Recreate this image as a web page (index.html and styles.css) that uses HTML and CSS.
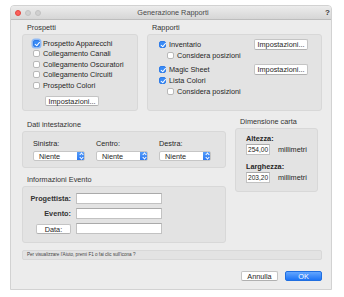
FILE: index.html
```html
<!DOCTYPE html>
<html lang="it">
<head>
    <meta charset="UTF-8">
    <meta name="viewport" content="width=device-width, initial-scale=1.0">
    <title>Generazione Rapporti</title>
    <link rel="stylesheet" href="styles.css">
</head>
<body>
    <div class="window">
        <div class="titlebar">
            <div class="lights">
                <span class="light red"></span>
                <span class="light"></span>
                <span class="light"></span>
            </div>
            <div class="title">Generazione Rapporti</div>
            <div class="help-icon">?</div>
        </div>

        <div class="content">
            <div class="top-row">
                <section class="group prospetti">
                    <div class="group-label">Prospetti</div>
                    <div class="group-box">
                        <div class="check"><span class="box checked focus"></span>Prospetto Apparecchi</div>
                        <div class="check"><span class="box"></span>Collegamento Canali</div>
                        <div class="check"><span class="box"></span>Collegamento Oscuratori</div>
                        <div class="check"><span class="box"></span>Collegamento Circuiti</div>
                        <div class="check"><span class="box"></span>Prospetto Colori</div>
                        <button class="btn btn-settings">Impostazioni...</button>
                    </div>
                </section>

                <section class="group rapporti">
                    <div class="group-label">Rapporti</div>
                    <div class="group-box">
                        <div class="report-row">
                            <div class="check"><span class="box checked"></span>Inventario</div>
                            <button class="btn">Impostazioni...</button>
                        </div>
                        <div class="check sub"><span class="box"></span>Considera posizioni</div>
                        <div class="report-row spaced">
                            <div class="check"><span class="box checked"></span>Magic Sheet</div>
                            <button class="btn">Impostazioni...</button>
                        </div>
                        <div class="check"><span class="box checked"></span>Lista Colori</div>
                        <div class="check sub"><span class="box"></span>Considera posizioni</div>
                    </div>
                </section>
            </div>

            <div class="mid-row">
                <div class="left-col">
                    <section class="group dati">
                        <div class="group-label">Dati intestazione</div>
                        <div class="group-box">
                            <div class="field">
                                <div class="field-label">Sinistra:</div>
                                <div class="popup"><span>Niente</span><span class="stepper"></span></div>
                            </div>
                            <div class="field">
                                <div class="field-label">Centro:</div>
                                <div class="popup"><span>Niente</span><span class="stepper"></span></div>
                            </div>
                            <div class="field">
                                <div class="field-label">Destra:</div>
                                <div class="popup"><span>Niente</span><span class="stepper"></span></div>
                            </div>
                        </div>
                    </section>

                    <section class="group evento">
                        <div class="group-label">Informazioni Evento</div>
                        <div class="group-box">
                            <div class="form-row">
                                <div class="form-label">Progettista:</div>
                                <div class="input"></div>
                            </div>
                            <div class="form-row">
                                <div class="form-label">Evento:</div>
                                <div class="input"></div>
                            </div>
                            <div class="form-row">
                                <div class="form-label"><button class="btn btn-data">Data:</button></div>
                                <div class="input"></div>
                            </div>
                        </div>
                    </section>
                </div>

                <section class="group carta">
                    <div class="group-label">Dimensione carta</div>
                    <div class="group-box">
                        <div class="size-label">Altezza:</div>
                        <div class="size-row"><div class="input small">254,00</div><span>millimetri</span></div>
                        <div class="size-label">Larghezza:</div>
                        <div class="size-row"><div class="input small">203,20</div><span>millimetri</span></div>
                    </div>
                </section>
            </div>

            <div class="help-bar">Per visualizzare l'Aiuto, premi F1 o fai clic sull'icona ?</div>

            <div class="actions">
                <button class="btn btn-action">Annulla</button>
                <button class="btn btn-action primary">OK</button>
            </div>
        </div>
    </div>
</body>
</html>
```

FILE: styles.css
```css
:root {
    --window-bg: #ececec;
    --group-bg: #e3e3e3;
    --group-border: #d8d8d8;
    --text: #262626;
    --blue: #3a8bf6;
}

* {
    box-sizing: border-box;
    margin: 0;
    padding: 0;
}

body {
    font-family: 'Liberation Sans', Arial, sans-serif;
    font-size: 7.3px;
    color: var(--text);
    background: #fff;
}

.window {
    margin: 5px 0 0 10px;
    width: 322px;
    height: 285px;
    background: var(--window-bg);
    border: 1px solid #d2d2d2;
    border-radius: 4px 4px 0 0;
    overflow: hidden;
}

/* barra del titolo */
.titlebar {
    height: 14px;
    display: flex;
    align-items: center;
    position: relative;
    background: linear-gradient(#ececec, #d6d6d6);
    border-bottom: 1px solid #bdbdbd;
}

.lights {
    display: flex;
    gap: 4px;
    padding-left: 4px;
}

.light {
    width: 6px;
    height: 6px;
    border-radius: 50%;
    background: #d0d0d0;
    border: 1px solid #c2c2c2;
}

.light.red {
    background: #fc605c;
    border-color: #e2463f;
}

.title {
    flex: 1;
    text-align: center;
    color: #4a4a4a;
    margin-right: 26px;
}

.help-icon {
    position: absolute;
    right: 1px;
    top: 2px;
    font-weight: bold;
    font-size: 8px;
    color: #3a3a3a;
}

.content {
    padding: 3px 0 0 11px;
}

/* gruppi */
.group-label {
    height: 10px;
    line-height: 10px;
    padding-left: 5px;
    color: #333;
    margin-bottom: 1px;
}

.group-box {
    background: var(--group-bg);
    border: 1px solid var(--group-border);
    border-radius: 3px;
}

.top-row {
    display: flex;
    gap: 9px;
}

.prospetti {
    width: 116px;
}

.prospetti .group-box {
    height: 77px;
    padding: 3px 0 0 10px;
}

.rapporti {
    width: 175px;
}

.rapporti .group-box {
    height: 77px;
    padding: 4px 13px 0 11px;
}

.check {
    display: flex;
    align-items: center;
    gap: 3px;
    height: 10.5px;
    white-space: nowrap;
}

.rapporti .check {
    height: 11px;
}

.check.sub {
    padding-left: 8px;
}

.box {
    width: 7px;
    height: 7px;
    flex: none;
    background: #fff;
    border: 1px solid #b9b9b9;
    border-radius: 2px;
    position: relative;
}

.box.checked {
    background: var(--blue);
    border-color: #2f7ce8;
}

.box.checked::after {
    content: '';
    position: absolute;
    left: 1.5px;
    top: 0;
    width: 2px;
    height: 3.5px;
    border-right: 1px solid #fff;
    border-bottom: 1px solid #fff;
    transform: rotate(40deg);
}

.box.focus {
    box-shadow: 0 0 0 1.5px #8fbaf5;
}

.report-row {
    display: flex;
    justify-content: space-between;
    align-items: center;
    height: 11px;
}

.report-row.spaced {
    margin-top: 3px;
}

/* pulsanti */
.btn {
    font-family: inherit;
    font-size: 7.3px;
    color: var(--text);
    background: #fff;
    border: 1px solid #c4c4c4;
    border-bottom-color: #b0b0b0;
    border-radius: 2px;
    height: 11px;
    width: 54px;
    line-height: 9px;
}

.btn-settings {
    margin: 5px 0 0 12px;
    height: 10px;
}

/* dati intestazione */
.mid-row {
    display: flex;
    gap: 9px;
    margin-top: 6px;
}

.left-col {
    width: 204px;
    padding-top: 3px;
}

.dati .group-box {
    height: 37px;
    display: flex;
    gap: 11px;
    padding: 7px 0 0 10px;
}

.field-label {
    height: 12px;
    line-height: 10px;
}

.popup {
    width: 52px;
    height: 10px;
    display: flex;
    justify-content: space-between;
    align-items: center;
    background: #fff;
    border: 1px solid #c6c6c6;
    border-radius: 2px;
    padding-left: 5px;
    overflow: hidden;
}

.stepper {
    width: 8px;
    height: 10px;
    margin-right: -1px;
    background: linear-gradient(#5aa1fb, #2875ef);
    border-radius: 0 2px 2px 0;
    position: relative;
}

.stepper::before,
.stepper::after {
    content: '';
    position: absolute;
    left: 2.5px;
    width: 2px;
    height: 2px;
    border-left: 1px solid #fff;
    border-top: 1px solid #fff;
}

.stepper::before {
    top: 2px;
    transform: rotate(45deg);
}

.stepper::after {
    top: 5px;
    transform: rotate(225deg);
}

/* informazioni evento */
.evento {
    margin-top: 7px;
}

.evento .group-box {
    height: 57px;
    padding-top: 6px;
}

.form-row {
    display: flex;
    align-items: center;
    height: 11px;
    margin-bottom: 4px;
}

.form-label {
    width: 53px;
    text-align: right;
    padding-right: 5px;
    font-weight: bold;
    color: #333;
}

.btn-data {
    width: 35px;
    height: 10px;
    font-weight: normal;
}

.input {
    width: 86px;
    height: 11px;
    background: #fff;
    border: 1px solid #c2c2c2;
    border-top-color: #aaa;
}

/* dimensione carta */
.carta {
    width: 83px;
}

.carta .group-box {
    height: 64px;
    padding: 5px 0 0 10px;
}

.size-label {
    font-weight: bold;
    height: 10px;
    line-height: 10px;
}

.size-row {
    display: flex;
    align-items: center;
    gap: 8px;
    height: 11px;
    margin-bottom: 7px;
}

.input.small {
    width: 24px;
    padding-left: 1px;
    font-size: 6.6px;
    line-height: 9px;
    white-space: nowrap;
}

/* barra aiuto e azioni */
.help-bar {
    width: 300px;
    height: 10px;
    margin-top: 7px;
    background: var(--group-bg);
    border: 1px solid var(--group-border);
    border-radius: 2px;
    font-size: 4.6px;
    line-height: 8px;
    padding-left: 4px;
    color: #444;
}

.actions {
    display: flex;
    justify-content: flex-end;
    gap: 7px;
    width: 300px;
    margin-top: 11px;
}

.btn-action {
    width: 37px;
    height: 10px;
}

.btn-action.primary {
    background: linear-gradient(#63a6ff, #1d74f5);
    border-color: #1f6ee0;
    color: #fff;
}
```
